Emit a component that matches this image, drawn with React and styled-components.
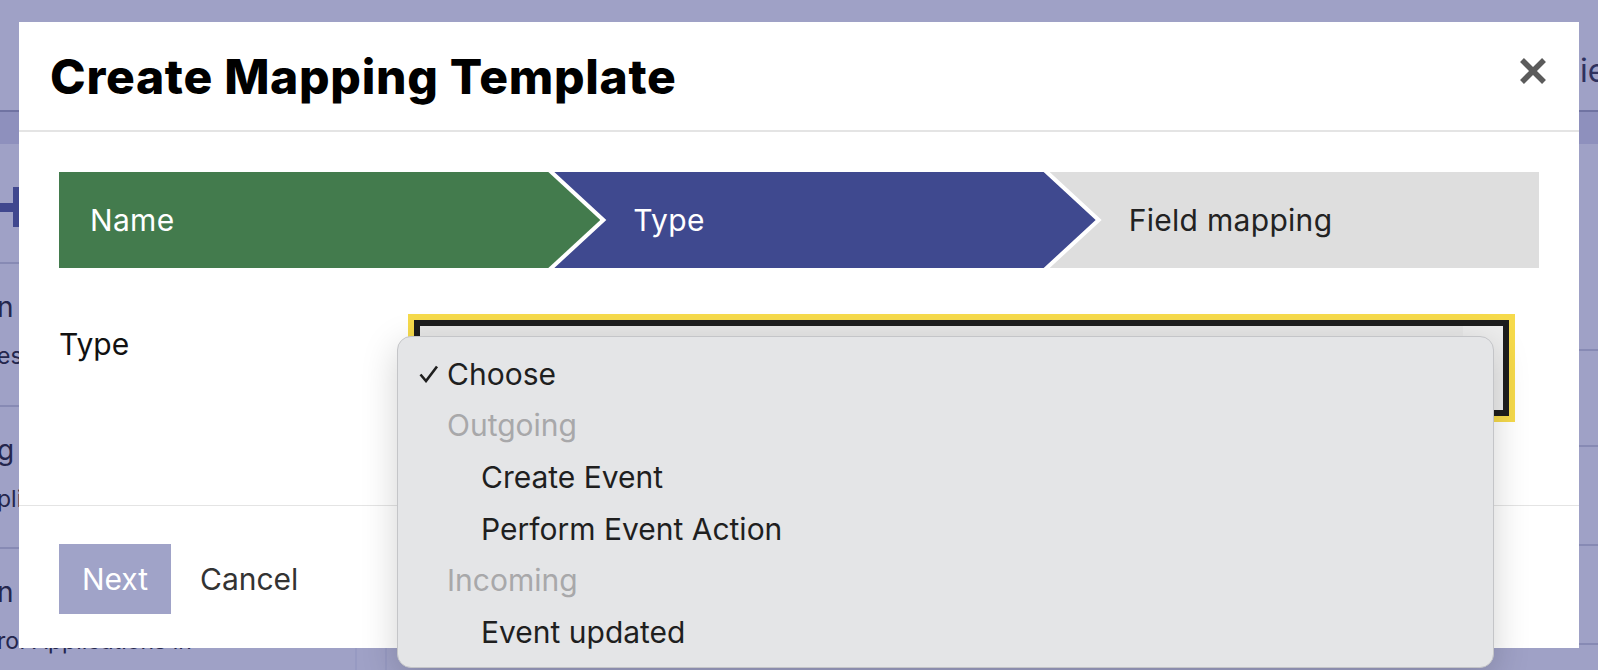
import React from "react";
import styled, { createGlobalStyle } from "styled-components";

const GlobalStyle = createGlobalStyle`
  html, body {
    margin: 0;
    padding: 0;
  }
  body {
    width: 1598px;
    height: 670px;
    overflow: hidden;
    background: #9fa1c6;
    font-family: Inter, "Noto Sans", sans-serif;
  }
  * {
    box-sizing: border-box;
  }
`;

const steps = [
  { label: "Name", state: "done" },
  { label: "Type", state: "current" },
  { label: "Field mapping", state: "todo" },
];

const options = [
  { label: "Choose", kind: "selected" },
  { label: "Outgoing", kind: "group" },
  { label: "Create Event", kind: "option" },
  { label: "Perform Event Action", kind: "option" },
  { label: "Incoming", kind: "group" },
  { label: "Event updated", kind: "option" },
];

// rows of the page behind the dialog; only their left ends show
const leftRows = [
  { height: 120, plus: true },
  { height: 143, title: "n", sub: "es" },
  { height: 142, title: "g", sub: "pli" },
  { height: 140, title: "n", sub: "ro. Applications in" },
];

const rightRows = [207, 96, 99, 99, 80];

export default function App() {
  return (
    <>
      <GlobalStyle />
      <Page>
        <TopBar>
          <span />
          <TopTitle>ies</TopTitle>
        </TopBar>
        <HeadBand />
        <Columns>
          <LeftCol>
            {leftRows.map((r, i) => (
              <Row key={i} $height={r.height}>
                {r.plus ? (
                  <PlusIcon width="40" height="40" viewBox="0 0 40 40">
                    <rect x="0" y="16" width="40" height="9" fill="#40478e" />
                    <rect x="16" y="0" width="8" height="40" fill="#40478e" />
                  </PlusIcon>
                ) : (
                  <>
                    <RowTitle>{r.title}</RowTitle>
                    <RowSub>{r.sub}</RowSub>
                  </>
                )}
              </Row>
            ))}
          </LeftCol>
          <Spacer />
          <RightCol>
            {rightRows.map((h, i) => (
              <Row key={i} $height={h} />
            ))}
          </RightCol>
        </Columns>

        <Modal role="dialog">
          <Header>
            <Title>Create Mapping Template</Title>
            <CloseButton aria-label="Close">
              <svg width="28" height="26" viewBox="0 0 28 26">
                <path d="M3 2 L25 24 M25 2 L3 24" stroke="#5b5b5b" strokeWidth="5.5" strokeLinecap="butt" />
              </svg>
            </CloseButton>
          </Header>

          <Body>
            <StepperClip>
              <StepTrack>
                {steps.map((s, i) => (
                  <Step key={s.label} $first={i === 0} $state={s.state}>
                    {s.label}
                  </Step>
                ))}
              </StepTrack>
            </StepperClip>

            <FormRow>
              <Label>Type</Label>
              <SelectBox>
                <SelectArrow>
                  <svg width="12" height="8" viewBox="0 0 12 8">
                    <path d="M1 1 L6 6 L11 1" stroke="#111" strokeWidth="2" fill="none" />
                  </svg>
                </SelectArrow>
                <Dropdown>
                  {options.map((o) => (
                    <Option key={o.label} $kind={o.kind}>
                      {o.kind === "selected" && (
                        <Check width="20" height="18" viewBox="0 0 20 18">
                          <path d="M1.5 9.5 L7 16 L18 1.5" stroke="#1f1f1f" strokeWidth="2.6" fill="none" />
                        </Check>
                      )}
                      {o.label}
                    </Option>
                  ))}
                </Dropdown>
              </SelectBox>
            </FormRow>
          </Body>

          <Footer>
            <NextButton type="button">Next</NextButton>
            <CancelButton type="button">Cancel</CancelButton>
          </Footer>
        </Modal>
      </Page>
    </>
  );
}

const Page = styled.div`
  position: relative;
  width: 1598px;
  height: 670px;
  overflow: hidden;
  background: #9fa1c6;
  color: #24264d;
`;

const TopBar = styled.header`
  height: 112px;
  display: grid;
  grid-template-columns: 1580px 1fr;
  border-bottom: 2px solid #7073a2;
`;

const TopTitle = styled.span`
  padding-top: 52px;
  font-size: 32px;
  line-height: 38px;
  color: #2e315f;
  white-space: nowrap;
`;

const HeadBand = styled.div`
  height: 32px;
  background: #8e90bd;
`;

const Columns = styled.div`
  display: flex;
  height: 526px;
`;

const LeftCol = styled.div`
  width: 357px;
  border-right: 2px solid #979ac2;
  overflow: hidden;
`;

const Spacer = styled.div`
  width: 30px;
  border-right: 2px solid #979ac2;
`;

const RightCol = styled.div`
  flex: 1;
`;

const Row = styled.div`
  height: ${(p) => p.$height}px;
  border-bottom: 2px solid #878ab4;
  padding-top: 26px;
  margin-left: -3px;
  white-space: nowrap;
`;

const PlusIcon = styled.svg`
  display: block;
  margin-top: 17px;
`;

const RowTitle = styled.div`
  font-size: 28px;
  line-height: 34px;
`;

const RowSub = styled.div`
  margin-top: 19px;
  font-size: 23px;
  line-height: 27px;
`;

const Modal = styled.div`
  position: absolute;
  left: 19px;
  top: 22px;
  width: 1560px;
  height: 626px;
  background: #fff;
  display: flex;
  flex-direction: column;
  font-family: Inter, "Noto Sans", sans-serif;
`;

const Header = styled.div`
  height: 110px;
  display: flex;
  align-items: center;
  justify-content: space-between;
  padding: 0 32px 0 31px;
  border-bottom: 2px solid #e4e4e4;
`;

const Title = styled.h1`
  margin: 0;
  font-size: 48px;
  font-weight: 800;
  color: #000;
  letter-spacing: 0.7px;
`;

const CloseButton = styled.button`
  display: flex;
  padding: 0;
  margin-bottom: 11px;
  border: 0;
  background: none;
  cursor: pointer;
`;

const Body = styled.div`
  padding: 40px 40px 89px;
  border-bottom: 1px solid #e4e4e4;
`;

const StepperClip = styled.div`
  height: 96px;
  overflow: hidden;
`;

const StepTrack = styled.ol`
  display: flex;
  height: 100%;
  margin: 0 -52px 0 0;
  padding: 0;
  list-style: none;
`;

const stepColors = {
  done: { bg: "#437b4d", fg: "#fff" },
  current: { bg: "#3f498f", fg: "#fff" },
  todo: { bg: "#dedede", fg: "#222" },
};

const Step = styled.li`
  flex: 0 0 calc((100% + 92px) / 3);
  display: flex;
  align-items: center;
  margin-left: ${(p) => (p.$first ? 0 : -46)}px;
  padding-left: ${(p) => (p.$first ? 31 : 79)}px;
  background: ${(p) => stepColors[p.$state].bg};
  color: ${(p) => stepColors[p.$state].fg};
  font-size: 30px;
  letter-spacing: 0.3px;
  clip-path: ${(p) =>
    p.$first
      ? "polygon(0 0, calc(100% - 52px) 0, 100% 50%, calc(100% - 52px) 100%, 0 100%)"
      : "polygon(0 0, calc(100% - 52px) 0, 100% 50%, calc(100% - 52px) 100%, 0 100%, 52px 50%)"};
`;

const FormRow = styled.div`
  display: grid;
  grid-template-columns: 355px 1fr;
  margin-top: 52px;
`;

const Label = styled.label`
  padding-top: 6px;
  font-size: 30px;
  line-height: 36px;
  color: #111;
`;

const SelectBox = styled.div`
  position: relative;
  height: 96px;
  margin-right: 30px;
  display: flex;
  justify-content: flex-end;
  border: 6px solid #1d1d1d;
  box-shadow: 0 0 0 6px #f6da4b;
  background: #e7e7e7;
`;

const SelectArrow = styled.div`
  width: 40px;
  display: flex;
  align-items: center;
  justify-content: center;
  background: #ededed;
`;

const Dropdown = styled.ul`
  position: absolute;
  left: -23px;
  top: 10px;
  width: 1097px;
  height: 332px;
  margin: 0;
  padding: 11px 0 9px;
  list-style: none;
  background: #e4e5e7;
  border: 1px solid #c4c5c8;
  border-radius: 14px;
  box-shadow: 0 10px 36px rgba(0, 0, 0, 0.18);
  z-index: 5;
`;

const Option = styled.li`
  display: flex;
  align-items: center;
  height: 51.6px;
  padding-left: ${(p) => (p.$kind === "selected" ? 21 : p.$kind === "group" ? 49 : 83)}px;
  font-size: 30px;
  color: ${(p) => (p.$kind === "group" ? "#a8a8aa" : "#1f1f1f")};
  white-space: nowrap;
`;

const Check = styled.svg`
  flex: none;
  margin-right: 8px;
`;

const Footer = styled.div`
  display: flex;
  align-items: center;
  padding: 38px 40px 0;
`;

const NextButton = styled.button`
  width: 112px;
  height: 70px;
  border: 0;
  padding: 0;
  background: #a0a3c8;
  color: #fff;
  font-family: inherit;
  font-size: 30px;
`;

const CancelButton = styled.button`
  margin-left: 29px;
  padding: 0;
  border: 0;
  background: none;
  color: #333;
  font-family: inherit;
  font-size: 30px;
`;
